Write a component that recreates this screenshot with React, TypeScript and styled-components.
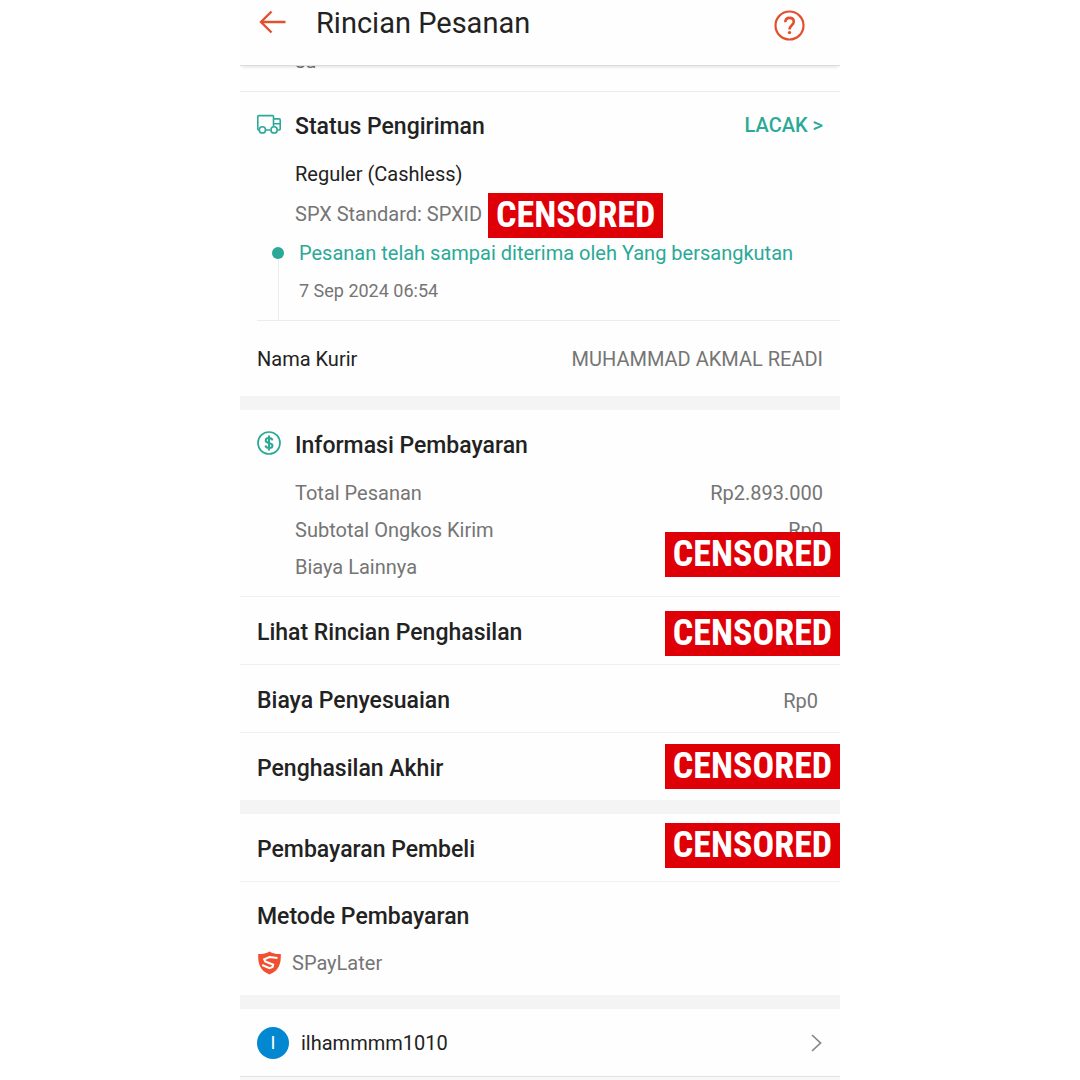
import React from "react";
import styled, { createGlobalStyle } from "styled-components";

const INK = "#222222";
const GREY = "#757575";
const TEAL = "#2aa996";
const ORANGE = "#e2502f";

const GlobalStyle = createGlobalStyle`
  * { box-sizing: border-box; }
  body {
    margin: 0;
    background: #ffffff;
    color: ${INK};
    font-family: Roboto, "Liberation Sans", sans-serif;
    font-size: 20px;
    line-height: 24px;
  }
  h1, h2, p, dl, dt, dd { margin: 0; font-weight: 400; }
  svg { display: block; flex: none; overflow: visible; }
`;

const Screen = styled.main`
  width: 100%;
  max-width: 600px;
  margin: 0 auto;
  background: #fefefe;
`;

const Header = styled.header`
  position: sticky;
  top: 0;
  z-index: 2;
  display: flex;
  align-items: flex-start;
  height: 66px;
  padding: 6px 34px 0 18px;
  background: #fefefe;
  border-bottom: 1px solid #dcdcdc;
  box-shadow: 0 3px 3px -2px rgba(0, 0, 0, 0.12);
`;

const IconButton = styled.button`
  display: flex;
  padding: 0;
  border: 0;
  background: none;
  color: ${ORANGE};
  cursor: pointer;
`;

const PageTitle = styled.h1`
  flex: 1;
  padding-left: 30px;
  font-size: 29px;
  line-height: 34px;
`;

const Peek = styled.div`
  display: flex;
  flex-direction: column;
  justify-content: flex-end;
  height: 26px;
  padding: 0 17px 18px 55px;
  overflow: hidden;
  color: ${GREY};
  border-bottom: 1px solid #ececec;
`;

const Section = styled.section`
  position: relative;
  & + & { border-top: 14px solid #f4f4f4; }
`;

const Block = styled.div<{ $top: number; $bottom: number; $line?: boolean }>`
  position: relative;
  padding: ${(p) => p.$top}px 17px ${(p) => p.$bottom}px;
  border-top: ${(p) => (p.$line ? "1px solid #f2f2f2" : "0")};
`;

const TitleRow = styled.div`
  display: flex;
  align-items: flex-start;
  gap: 14px;
`;

const Title = styled.h2`
  flex: 1;
  font-size: 23px;
  font-weight: 500;
  line-height: 28px;
`;

const TrackLink = styled.a`
  color: ${TEAL};
  font-weight: 500;
  text-decoration: none;
`;

const Shipping = styled.div`
  display: flex;
  flex-direction: column;
  align-items: flex-start;
  gap: 16px;
  padding: 21px 0 15px 38px;
`;

const Tracking = styled.p`
  position: relative;
  color: ${GREY};
`;

const Timeline = styled.div`
  display: grid;
  grid-template-columns: 12px 1fr;
  column-gap: 15px;
  padding-left: 15px;
`;

const Rail = styled.div`
  display: flex;
  flex-direction: column;
  align-items: center;
  padding-top: 6px;
  &::before {
    content: "";
    width: 12px;
    height: 12px;
    border-radius: 50%;
    background: ${TEAL};
  }
  &::after {
    content: "";
    flex: 1;
    width: 1px;
    background: #ececec;
  }
`;

const Event = styled.div`
  display: flex;
  flex-direction: column;
  gap: 14px;
  padding-bottom: 17px;
`;

const EventText = styled.p`
  color: ${TEAL};
`;

const EventTime = styled.time`
  color: ${GREY};
  font-size: 18px;
`;

const Courier = styled.dl`
  display: flex;
  align-items: center;
  justify-content: space-between;
  height: 76px;
  margin-left: 17px;
  padding-right: 17px;
  border-top: 1px solid #ececec;
`;

const Muted = styled.dd`
  color: ${GREY};
`;

const Costs = styled.dl`
  display: flex;
  flex-direction: column;
  gap: 13px;
  padding: 21px 0 0 38px;
  color: ${GREY};
`;

const Cost = styled.div`
  display: flex;
  justify-content: space-between;
`;

const Row = styled.div<{ $line?: boolean }>`
  position: relative;
  display: flex;
  align-items: center;
  height: ${(p) => (p.$line ? 68 : 67)}px;
  padding: 5px 22px 0 17px;
  border-top: ${(p) => (p.$line ? "1px solid #efefef" : "0")};
`;

const Value = styled.span`
  color: ${GREY};
`;

const Stamp = styled.span<{ $top: number; $inline?: boolean }>`
  position: absolute;
  top: ${(p) => p.$top}px;
  ${(p) => (p.$inline ? "left: 100%; margin-left: 6px;" : "right: 0;")}
  display: flex;
  align-items: center;
  justify-content: center;
  width: 175px;
  height: 45px;
  background: #df0007;
  color: #ffffff;
  font-family: "Roboto Condensed", Roboto, sans-serif;
  font-size: 36px;
  font-weight: 700;
  line-height: 45px;
`;

const Method = styled.p`
  display: flex;
  align-items: center;
  gap: 10px;
  padding-top: 20px;
  color: ${GREY};
`;

const UserLink = styled.a`
  display: flex;
  align-items: center;
  gap: 12px;
  height: 68px;
  padding: 0 17px;
  border-bottom: 1px solid #e2e2e2;
  color: ${INK};
  text-decoration: none;
`;

const Avatar = styled.span`
  display: grid;
  place-items: center;
  width: 32px;
  height: 32px;
  border-radius: 50%;
  background: #0288d1;
  color: #ffffff;
  font-size: 18px;
`;

const UserName = styled.span`
  flex: 1;
`;

const Footer = styled.div`
  height: 3px;
  background: #f8f8f8;
`;

function BackIcon() {
  return (
    <svg width="28" height="32" viewBox="0 0 28 32" fill="none" stroke="currentColor" strokeWidth="2.4">
      <path d="M27.5 16H3M13.5 5.5 3 16l10.5 10.5" />
    </svg>
  );
}

function HelpIcon() {
  return (
    <svg width="32" height="38" viewBox="0 0 32 38" fill="none" stroke="currentColor">
      <circle cx="15.5" cy="19.5" r="14" strokeWidth="2.2" />
      <path d="M11.3 16.2c0-2.7 1.6-4.3 4.3-4.3s4.2 1.6 4.2 3.9c0 3.3-4.3 3.6-4.3 7.6" strokeWidth="2.6" />
      <circle cx="15.5" cy="26.6" r="1.7" fill="currentColor" stroke="none" />
    </svg>
  );
}

function TruckIcon() {
  return (
    <svg width="24" height="28" viewBox="0 1 24 28" fill="none" stroke={TEAL} strokeWidth="1.6">
      <path d="M2.2 18H1.8a1 1 0 0 1-1-1V4.6a1 1 0 0 1 1-1h13.7a1 1 0 0 1 1 1v9.6M8.6 18h5M16.5 6.9h5.7a1 1 0 0 1 1 1V17a1 1 0 0 1-1 1h-1.6M16.5 11.8h6.7" />
      <circle cx="5.4" cy="17.9" r="3.1" />
      <circle cx="17.1" cy="17.9" r="3.1" />
    </svg>
  );
}

function CoinIcon() {
  return (
    <svg width="24" height="28" viewBox="0 2 24 28" fill="none" stroke={TEAL} strokeWidth="1.7">
      <circle cx="12" cy="13" r="11" />
      <path d="M15.4 10.4C15.1 8.8 13.8 8 12 8c-1.9 0-3.3.9-3.3 2.4 0 3.4 6.8 1.8 6.8 5.2 0 1.5-1.5 2.500-3.500 2.500-1.900 0-3.200-.800-3.600-2.500M12 5.500v15" strokeWidth="2" />
    </svg>
  );
}

function ShieldIcon() {
  return (
    <svg width="25" height="24" viewBox="0 0 25 24" fill="none">
      <path d="M12.5.5C9 2.6 5 3.2 1.2 3c-.3 9.5 1.5 16.5 11.3 20.5C22.3 19.5 24.1 12.5 23.8 3 20 3.2 16 2.6 12.5.5Z" fill="#f0502f" />
      <path d="M20.500 7 12.600 6 7.200 8.300l1 2.200 8 3.200-.6 2.300-3.200 1.200L5.200 14" stroke="#ffffff" strokeWidth="2" />
    </svg>
  );
}

function ChevronIcon() {
  return (
    <svg width="12" height="20" viewBox="0 0 12 20" fill="none" stroke="#858585" strokeWidth="1.7">
      <path d="M1 2l8.500 8L1 18" />
    </svg>
  );
}

const costs = [
  { label: "Total Pesanan", value: "Rp2.893.000" },
  { label: "Subtotal Ongkos Kirim", value: "Rp0" },
  { label: "Biaya Lainnya", value: "" },
];

export default function App() {
  return (
    <>
      <GlobalStyle />
      <Screen>
        <Header>
          <IconButton type="button" aria-label="Kembali">
            <BackIcon />
          </IconButton>
          <PageTitle>Rincian Pesanan</PageTitle>
          <IconButton type="button" aria-label="Bantuan">
            <HelpIcon />
          </IconButton>
        </Header>

        <Peek>su</Peek>

        <Section>
          <Block $top={21} $bottom={0}>
            <TitleRow>
              <TruckIcon />
              <Title>Status Pengiriman</Title>
              <TrackLink href="#lacak">LACAK &gt;</TrackLink>
            </TitleRow>
            <Shipping>
              <p>Reguler (Cashless)</p>
              <Tracking>
                SPX Standard: SPXID
                <Stamp $top={-9} $inline>CENSORED</Stamp>
              </Tracking>
            </Shipping>
            <Timeline>
              <Rail />
              <Event>
                <EventText>Pesanan telah sampai diterima oleh Yang bersangkutan</EventText>
                <EventTime>7 Sep 2024 06:54</EventTime>
              </Event>
            </Timeline>
          </Block>
          <Courier>
            <dt>Nama Kurir</dt>
            <Muted>MUHAMMAD AKMAL READI</Muted>
          </Courier>
        </Section>

        <Section>
          <Block $top={22} $bottom={17}>
            <TitleRow>
              <CoinIcon />
              <Title>Informasi Pembayaran</Title>
            </TitleRow>
            <Costs>
              {costs.map((cost) => (
                <Cost key={cost.label}>
                  <dt>{cost.label}</dt>
                  <dd>{cost.value}</dd>
                </Cost>
              ))}
            </Costs>
            <Stamp $top={122}>CENSORED</Stamp>
          </Block>
          <Row $line>
            <Title>Lihat Rincian Penghasilan</Title>
            <Stamp $top={14}>CENSORED</Stamp>
          </Row>
          <Row $line>
            <Title>Biaya Penyesuaian</Title>
            <Value>Rp0</Value>
          </Row>
          <Row $line>
            <Title>Penghasilan Akhir</Title>
            <Stamp $top={11}>CENSORED</Stamp>
          </Row>
        </Section>

        <Section>
          <Row>
            <Title>Pembayaran Pembeli</Title>
            <Stamp $top={9}>CENSORED</Stamp>
          </Row>
          <Block $top={21} $bottom={20} $line>
            <Title>Metode Pembayaran</Title>
            <Method>
              <ShieldIcon />
              SPayLater
            </Method>
          </Block>
        </Section>

        <Section>
          <UserLink href="#ilhammmm1010">
            <Avatar>I</Avatar>
            <UserName>ilhammmm1010</UserName>
            <ChevronIcon />
          </UserLink>
        </Section>
        <Footer />
      </Screen>
    </>
  );
}
